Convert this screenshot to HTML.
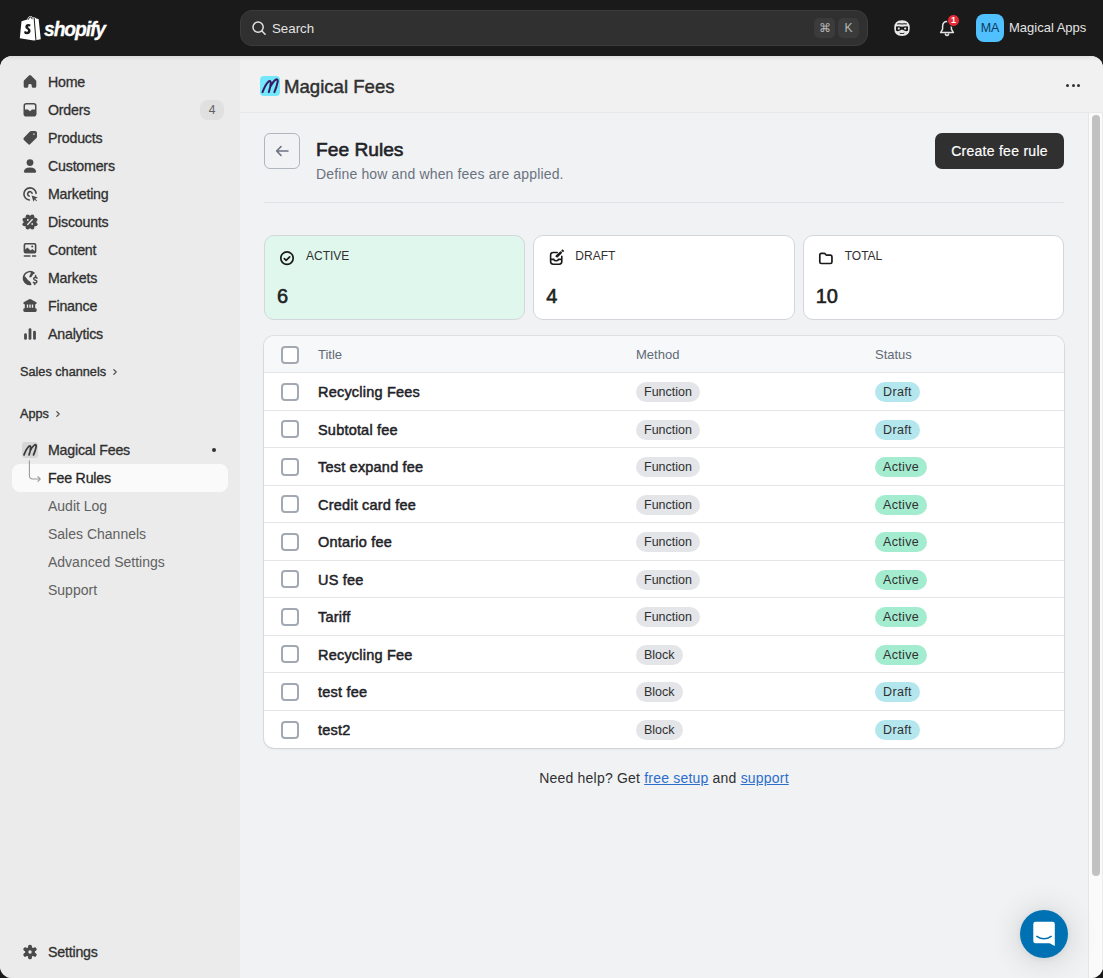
<!DOCTYPE html>
<html><head><meta charset="utf-8">
<style>
*{box-sizing:border-box;margin:0;padding:0}
html,body{width:1103px;height:978px;overflow:hidden;background:#1a1a1a;font-family:"Liberation Sans",sans-serif;color:#303030}
.a{position:absolute;white-space:nowrap}
#frame{position:absolute;left:0;top:56px;width:1103px;height:922px;border-radius:12px;overflow:hidden;background:#f1f2f4}
#side{position:absolute;left:0;top:0;width:240px;height:922px;background:#ebebeb}
#apphdr{position:absolute;left:240px;top:0;width:863px;height:57px;background:#f1f1f1;border-bottom:1px solid #e8e8e8}
#sb{position:absolute;left:1088px;top:57px;width:15px;height:865px;background:#fafafa;border-left:1px solid #e6e6e6;border-right:1px solid #ececec}
#thumb{position:absolute;left:3px;top:2px;width:8px;height:761px;border-radius:4px;background:#c1c1c1}
.nv{position:absolute;left:48px;font-size:14.2px;line-height:28px;color:#303030;white-space:nowrap;-webkit-text-stroke:.3px #303030;margin-top:.3px;letter-spacing:-.2px}
.ic{position:absolute;left:20px;width:20px;height:20px}
.sub{position:absolute;left:48px;font-size:14px;line-height:28px;color:#616161;white-space:nowrap}
.card{position:absolute;top:235px;height:85px;border:1px solid #d3d6da;border-radius:10px;background:#fff}
.lbl{position:absolute;left:41px;top:12px;font-size:12px;line-height:16px;color:#303030}
.num{position:absolute;left:12px;top:48px;font-size:20px;line-height:24px;color:#1f1f1f;-webkit-text-stroke:.6px #1f1f1f}
.card svg{position:absolute;left:12px;top:13px}
#tbl{position:absolute;left:264px;top:336px;width:800px;height:411.5px;background:#fff;border-radius:10px;box-shadow:0 0 0 1px rgba(0,0,0,.07),0 1px 3px rgba(0,0,0,.08);overflow:hidden}
#th{position:absolute;left:0;top:0;width:800px;height:37px;background:#f7f8fa;border-bottom:1px solid #e3e5e8}
.hd{position:absolute;top:.8px;line-height:36px;font-size:13px;color:#616a75}
.row{position:absolute;left:0;width:800px;height:37.5px;border-bottom:1px solid #e3e5e8}
.cb{position:absolute;left:17px;top:50%;margin-top:-8.4px;width:18px;height:18px;border:2px solid #a3a9b3;border-radius:4px;background:#fff}
#th .cb{background:#fff}
.ttl{position:absolute;left:54px;top:1.2px;line-height:36.5px;font-size:14.5px;letter-spacing:.2px;color:#1f2328;-webkit-text-stroke:.5px #1f2328}
.bdg{position:absolute;top:50%;margin-top:-8.8px;height:20px;border-radius:10px;font-size:12.5px;line-height:20px;padding:0 8px;color:#303030}
.meth{left:372px;background:#e3e5e8}
.st{left:611px;letter-spacing:.35px}
.dr{background:#b4e6ee}
.ac{background:#a4ecd0}
</style></head><body>
<!-- top bar -->
<svg class="a" style="left:19px;top:15px" width="23" height="26" viewBox="0 0 23 26">
  <path fill="#fff" d="M2.5 6.2 L8.2 4.6 Q9.2 1 11.8 1 Q13 1 13.6 2.4 L15.6 2.1 L17.2 3.6 L19.6 4 L21.8 24.2 L14.8 25.6 L0.8 23.3 Z"/>
  <path fill="#1a1a1a" d="M15.6 2.2 L17.4 24.9 L16.4 25.1 L14.6 2.6 Z"/>
  <path fill="none" stroke="#1a1a1a" stroke-width="1" d="M9.2 4.7 Q10.2 1.8 11.8 1.9 Q13 2 13.1 4.2"/>
  <path fill="#1a1a1a" d="M11.6 9.6 Q10.6 9 9.3 9 Q6.4 9.1 6.3 11.9 Q6.3 13.2 8 14.3 Q9.2 15.1 9.1 15.8 Q9 16.8 8 16.8 Q6.7 16.8 5.8 15.7 L5.1 18 Q6 19.2 8 19.2 Q11.4 19.1 11.6 15.8 Q11.6 14 9.9 13 Q8.8 12.3 8.9 11.8 Q9 11.2 10.1 11.2 Q10.9 11.2 11 11.4 Z"/>
</svg>
<div class="a" style="left:43.5px;top:14.7px;font-size:21px;line-height:28px;font-weight:bold;font-style:italic;color:#fff;letter-spacing:-1.2px;transform:scaleX(.92);transform-origin:0 0;-webkit-text-stroke:.3px #fff">shopify</div>
<div class="a" style="left:240px;top:10px;width:628px;height:36px;border-radius:12px;background:#303030;border:1px solid #3c3c3c"></div>
<svg class="a" style="left:250px;top:18px" width="20" height="20" viewBox="0 0 20 20"><circle cx="8.1" cy="9.2" r="5.1" fill="none" stroke="#e3e3e3" stroke-width="1.5"/><path d="M11.9 13 L15.1 16.2" stroke="#e3e3e3" stroke-width="1.5" stroke-linecap="round"/></svg>
<div class="a" style="left:272px;top:15.3px;font-size:13.3px;line-height:28px;color:#e3e3e3">Search</div>
<div class="a" style="left:814px;top:18px;width:21px;height:20px;border-radius:5px;background:#3b3b3b;color:#b5b5b5;font-size:12px;line-height:20px;text-align:center">&#8984;</div>
<div class="a" style="left:838px;top:18px;width:21px;height:20px;border-radius:5px;background:#3b3b3b;color:#b5b5b5;font-size:12px;line-height:20px;text-align:center">K</div>
<!-- mask icon -->
<svg class="a" style="left:892px;top:18px" width="20" height="20" viewBox="0 0 20 20">
  <path fill="#e8e8e8" d="M10 2.2 Q17.8 2.2 17.8 10 Q17.8 18 10 18 Q2.2 18 2.2 10 Q2.2 2.2 10 2.2Z"/>
  <path fill="#1a1a1a" d="M4 8.6 Q6.5 7.6 10 8.8 Q13.5 7.6 16 8.6 V12.6 Q14.4 13.6 12.6 12.8 L10 11.6 L7.4 12.8 Q5.6 13.6 4 12.6Z"/>
  <circle cx="6.8" cy="10.6" r="1.1" fill="#e8e8e8"/><circle cx="13.2" cy="10.6" r="1.1" fill="#e8e8e8"/>
  <path fill="#1a1a1a" d="M5 5.6 Q7 4.8 10 5.5 Q13 4.8 15 5.6 L14.6 6.6 Q12.5 6 10 6.6 Q7.5 6 5.4 6.6Z"/>
  <path fill="#1a1a1a" d="M7.5 14.6 Q10 15.8 12.5 14.6 L12.2 15.6 Q10 16.6 7.8 15.6Z"/>
</svg>
<!-- bell -->
<svg class="a" style="left:936.6px;top:18px" width="20" height="20" viewBox="0 0 20 20"><path fill="none" stroke="#e3e3e3" stroke-width="1.5" stroke-linejoin="round" d="M10 3.6 Q14.2 3.6 14.4 8.4 V11.2 L16.4 14.6 H3.6 L5.6 11.2 V8.4 Q5.8 3.6 10 3.6Z"/><path fill="none" stroke="#e3e3e3" stroke-width="1.5" d="M8.3 15.4 Q8.4 17.4 10 17.4 Q11.6 17.4 11.7 15.4"/></svg>
<div class="a" style="left:947px;top:14px;width:13px;height:13px;border-radius:50%;background:#e22c38;border:1px solid #1a1a1a;color:#fff;font-size:9px;line-height:11px;text-align:center;font-weight:bold">1</div>
<div class="a" style="left:976px;top:14px;width:28px;height:28px;border-radius:8px;background:#51c0ff;color:#0b3b5c;font-size:12.5px;line-height:28px;text-align:center">MA</div>
<div class="a" style="left:1009px;top:14px;font-size:13px;line-height:28px;color:#e3e3e3">Magical Apps</div>

<div id="frame">
  <div id="side"></div>
  <div id="apphdr"></div>
  <div id="sb"><div id="thumb"></div></div>
  <div style="position:absolute;left:0;top:0;width:1103px;height:5px;background:linear-gradient(rgba(0,0,0,.07),rgba(0,0,0,0))"></div>
</div>

<!-- sidebar -->
<!-- sidebar icons -->
<svg class="ic" style="top:72px" viewBox="0 0 20 20"><path fill="#4a4a4a" d="M10 3 Q10.5 3 11 3.5 L15.8 8.2 Q16.3 8.7 16.3 9.5 V14.2 Q16.3 15.7 14.8 15.7 H12.8 Q11.7 15.7 11.7 14.6 V13.2 Q11.7 11.9 10 11.9 Q8.3 11.9 8.3 13.2 V14.6 Q8.3 15.7 7.2 15.7 H5.2 Q3.7 15.7 3.7 14.2 V9.5 Q3.7 8.7 4.2 8.2 L9 3.5 Q9.5 3 10 3Z"/></svg>
<svg class="ic" style="top:100px" viewBox="0 0 20 20"><path fill="#4a4a4a" fill-rule="evenodd" d="M6.2 3 H13.8 Q16.5 3 16.5 5.8 V13.8 Q16.5 16.6 13.8 16.6 H6.2 Q3.5 16.6 3.5 13.8 V5.8 Q3.5 3 6.2 3Z M6.4 4.6 Q5 4.6 5 6 V9.6 H7.6 Q8.4 9.6 8.8 10.3 L10 11.3 L11.2 10.3 Q11.6 9.6 12.4 9.6 H15 V6 Q15 4.6 13.6 4.6Z"/></svg>
<svg class="ic" style="top:128px" viewBox="0 0 20 20"><path fill="#4a4a4a" fill-rule="evenodd" d="M11.3 3 H15 Q17 3 17 5 V8.7 Q17 9.5 16.4 10.1 L10.3 16.1 Q9.2 17.2 8.1 16.1 L3.9 11.9 Q2.8 10.8 3.9 9.7 L9.9 3.6 Q10.5 3 11.3 3Z M13.2 5.4 H14.6 V6.8 H13.2Z"/></svg>
<svg class="ic" style="top:156px" viewBox="0 0 20 20"><circle cx="10" cy="6.6" r="3.4" fill="#4a4a4a"/><path fill="#4a4a4a" d="M3.9 15.4 Q4.4 11.4 10 11.4 Q15.6 11.4 16.1 15.4 Q16.2 16.8 14.8 16.8 H5.2 Q3.8 16.8 3.9 15.4Z"/></svg>
<svg class="ic" style="top:184px" viewBox="0 0 20 20"><path fill="none" stroke="#4a4a4a" stroke-width="1.6" stroke-linecap="round" d="M9.4 16 A6.1 6.1 0 1 1 16.1 9.4"/><path fill="none" stroke="#4a4a4a" stroke-width="1.6" stroke-linecap="round" d="M9.1 12.1 A2.3 2.3 0 1 1 12.1 9.2"/><path fill="#4a4a4a" d="M11.6 11.4 L17.8 13.5 L15.2 14.7 L17 16.5 L16.3 17.2 L14.5 15.4 L13.4 17.8Z"/></svg>
<svg class="ic" style="top:212px" viewBox="0 0 20 20"><g fill="#4a4a4a"><circle cx="15.45" cy="12.26" r="2.1"/><circle cx="12.26" cy="15.45" r="2.1"/><circle cx="7.74" cy="15.45" r="2.1"/><circle cx="4.55" cy="12.26" r="2.1"/><circle cx="4.55" cy="7.74" r="2.1"/><circle cx="7.74" cy="4.55" r="2.1"/><circle cx="12.26" cy="4.55" r="2.1"/><circle cx="15.45" cy="7.74" r="2.1"/><circle cx="10" cy="10" r="6.3"/></g><path d="M12.3 7.5 L7.7 12.5" stroke="#ebebeb" stroke-width="1.3" stroke-linecap="round"/><rect x="7" y="7.2" width="1.6" height="1.6" fill="#ebebeb"/><rect x="11.4" y="11.2" width="1.6" height="1.6" fill="#ebebeb"/></svg>
<svg class="ic" style="top:240px" viewBox="0 0 20 20"><path fill="#4a4a4a" fill-rule="evenodd" d="M5.6 3 H14.4 Q16.4 3 16.4 5 V11.6 Q16.4 13.6 14.4 13.6 H5.6 Q3.6 13.6 3.6 11.6 V5 Q3.6 3 5.6 3Z M5.8 4.6 Q5.2 4.6 5.2 5.2 V9.6 L7.4 7.6 L10.6 10.4 L12.2 9 L14.8 11 V5.2 Q14.8 4.6 14.2 4.6Z"/><circle cx="12.2" cy="6.6" r="1" fill="#4a4a4a"/><rect x="3.6" y="15.3" width="7" height="1.5" rx=".7" fill="#4a4a4a"/><rect x="11.8" y="15.3" width="4.6" height="1.5" rx=".7" fill="#4a4a4a"/></svg>
<svg class="ic" style="top:268px" viewBox="0 0 20 20"><path fill="none" stroke="#4a4a4a" stroke-width="1.5" d="M14.3 5.4 A6.4 6.4 0 1 0 11.2 16.3"/><path fill="#4a4a4a" d="M3.4 8.4 Q5 7.6 6.6 10.2 Q8.2 12.8 9.9 13.6 Q11 14.4 11.4 16.6 Q4.6 17.4 3.3 11Z"/><path fill="#4a4a4a" d="M11 4 Q13.6 4 14.9 5.2 Q13.2 5.8 12.4 7.4 Q11.6 9.4 10 9.5 Q8.9 9.3 9.4 8 Q10.6 6.8 11 4Z"/><path fill="none" stroke="#4a4a4a" stroke-width="1.5" stroke-linecap="round" d="M17 10.2 Q16.5 9.3 15.3 9.3 Q13.7 9.4 13.7 10.8 Q13.8 11.9 15.3 12.2 Q16.9 12.5 16.9 13.8 Q16.8 15.1 15.2 15.1 Q14.1 15.1 13.5 14.4 M15.6 7.5 L15.6 9 M14.8 15.2 V16.4"/></svg>
<svg class="ic" style="top:296px" viewBox="0 0 20 20"><path fill="#4a4a4a" fill-rule="evenodd" d="M9.2 3.3 Q10 2.9 10.8 3.3 L15.9 5.9 Q16.7 6.3 16.7 7.1 Q16.7 8.2 15.6 8.2 H15.2 V12.2 H15.6 Q16.7 12.2 16.7 13.6 V14.6 Q16.7 16 15.3 16 H4.7 Q3.3 16 3.3 14.6 V13.6 Q3.3 12.2 4.4 12.2 H4.8 V8.2 H4.4 Q3.3 8.2 3.3 7.1 Q3.3 6.3 4.1 5.9Z M6.8 8.6 H8.2 V11.8 H6.8Z M9.3 8.6 H10.7 V11.8 H9.3Z M11.8 8.6 H13.2 V11.8 H11.8Z"/></svg>
<svg class="ic" style="top:324px" viewBox="0 0 20 20"><rect x="4.1" y="9.3" width="2.8" height="6.5" rx="1.4" fill="#4a4a4a"/><rect x="8.6" y="4.2" width="2.8" height="11.6" rx="1.4" fill="#4a4a4a"/><rect x="13.1" y="6.7" width="2.8" height="9.1" rx="1.4" fill="#4a4a4a"/></svg>
<svg class="ic" style="top:942px" viewBox="0 0 20 20"><g fill="#4a4a4a"><rect x="8.1" y="2.7" width="3.8" height="14.6" rx="1.6"/><rect x="8.1" y="2.7" width="3.8" height="14.6" rx="1.6" transform="rotate(60 10 10)"/><rect x="8.1" y="2.7" width="3.8" height="14.6" rx="1.6" transform="rotate(120 10 10)"/><circle cx="10" cy="10" r="5"/></g><circle cx="10" cy="10" r="1.7" fill="#ebebeb"/></svg>

<div class="nv" style="top:68px">Home</div>
<div class="nv" style="top:96px">Orders</div>
<div class="a" style="left:200px;top:100px;width:24px;height:20px;border-radius:8px;background:#e0e0e0;color:#616161;font-size:12px;line-height:20px;text-align:center">4</div>
<div class="nv" style="top:124px">Products</div>
<div class="nv" style="top:152px">Customers</div>
<div class="nv" style="top:180px">Marketing</div>
<div class="nv" style="top:208px">Discounts</div>
<div class="nv" style="top:236px">Content</div>
<div class="nv" style="top:264px">Markets</div>
<div class="nv" style="top:292px">Finance</div>
<div class="nv" style="top:320px">Analytics</div>
<div class="a" style="left:20px;top:361.8px;font-size:12.7px;line-height:20px;color:#303030;-webkit-text-stroke:.35px #303030">Sales channels</div>
<svg class="a" style="left:110.4px;top:367px" width="10" height="10" viewBox="0 0 10 10"><path d="M3.8 2.6 L6.2 5 L3.8 7.4" fill="none" stroke="#4a4a4a" stroke-width="1.2" stroke-linecap="round" stroke-linejoin="round"/></svg>
<div class="a" style="left:20px;top:403.7px;font-size:12.7px;line-height:20px;color:#303030;-webkit-text-stroke:.35px #303030">Apps</div>
<svg class="a" style="left:53.4px;top:409px" width="10" height="10" viewBox="0 0 10 10"><path d="M3.8 2.6 L6.2 5 L3.8 7.4" fill="none" stroke="#4a4a4a" stroke-width="1.2" stroke-linecap="round" stroke-linejoin="round"/></svg>
<div class="a" style="left:22px;top:442px;width:16px;height:16px;border-radius:3px;background:#d6d6d6"></div>
<svg class="a" style="left:22px;top:442px" width="16" height="16" viewBox="0 0 20 20"><path d="M2.5 16.1 Q5.6 8 8.6 5.4 Q10.6 4 10.8 6.8 Q10.6 11 8.8 16.1 M10 11.4 Q13 5.5 15.8 3.6 Q17.8 2.6 17.8 5.4 Q17 10 14.4 16.1" fill="none" stroke="#3a3a3a" stroke-width="2.2" stroke-linecap="round" stroke-linejoin="round"/></svg>
<div class="nv" style="top:436px">Magical Fees</div>
<div class="a" style="left:212px;top:448px;width:4px;height:4px;border-radius:50%;background:#303030"></div>
<div class="a" style="left:12px;top:464px;width:216px;height:28px;border-radius:8px;background:#fafafa"></div>
<svg class="a" style="left:26px;top:458px" width="18" height="26" viewBox="0 0 18 26"><path d="M3.4 2.5 V17.5 Q3.4 21 7 21 H14" fill="none" stroke="#9a9a9a" stroke-width="1.1"/><path d="M11.6 18.4 L14.2 21 L11.6 23.6" fill="none" stroke="#9a9a9a" stroke-width="1.1" stroke-linejoin="round"/></svg>
<div class="nv" style="top:464px;color:#1f1f1f">Fee Rules</div>
<div class="sub" style="top:492px">Audit Log</div>
<div class="sub" style="top:520px">Sales Channels</div>
<div class="sub" style="top:548px">Advanced Settings</div>
<div class="sub" style="top:576px">Support</div>
<div class="nv" style="top:938px">Settings</div>

<!-- app header -->
<div class="a" style="left:260px;top:76px;width:20px;height:20px;border-radius:4px;background:#72e8fa"></div>
<svg class="a" style="left:260px;top:76px" width="20" height="20" viewBox="0 0 20 20"><path d="M2.5 16.1 Q5.6 8 8.6 5.4 Q10.6 4 10.8 6.8 Q10.6 11 8.8 16.1 M10 11.4 Q13 5.5 15.8 3.6 Q17.8 2.6 17.8 5.4 Q17 10 14.4 16.1" fill="none" stroke="#3a1a63" stroke-width="2" stroke-linecap="round" stroke-linejoin="round"/></svg>
<div class="a" style="left:284px;top:72.7px;font-size:18.6px;line-height:28px;color:#303030;-webkit-text-stroke:.45px #303030">Magical Fees</div>
<div class="a" style="left:1066px;top:84px;width:3px;height:3px;border-radius:50%;background:#303030"></div>
<div class="a" style="left:1071.5px;top:84px;width:3px;height:3px;border-radius:50%;background:#303030"></div>
<div class="a" style="left:1077px;top:84px;width:3px;height:3px;border-radius:50%;background:#303030"></div>

<!-- page header -->
<div class="a" style="left:264px;top:133px;width:36px;height:36px;border:1px solid #b0b6be;border-radius:6px"></div>
<svg class="a" style="left:272px;top:141px" width="20" height="20" viewBox="0 0 20 20"><path d="M16 10 H4.6 M9 5.6 L4.6 10 L9 14.4" fill="none" stroke="#6b7280" stroke-width="1.5" stroke-linecap="round" stroke-linejoin="round"/></svg>
<div class="a" style="left:316px;top:138px;font-size:19.2px;line-height:24px;color:#1f2328;-webkit-text-stroke:.6px #1f2328">Fee Rules</div>
<div class="a" style="left:316px;top:163.5px;font-size:14px;line-height:20px;color:#6b7280;letter-spacing:.15px">Define how and when fees are applied.</div>
<div class="a" style="left:935px;top:133px;width:129px;height:36px;border-radius:7px;background:#303030;color:#fff;font-size:14px;line-height:36px;text-align:center;letter-spacing:.27px;-webkit-text-stroke:.2px #fff">Create fee rule</div>
<div class="a" style="left:264px;top:202px;width:800px;height:1px;background:#e1e3e6"></div>

<!-- cards -->
<div class="card" style="left:264px;width:261.3px;background:#e0f7ee">
  <svg width="20" height="20" viewBox="0 0 20 20"><circle cx="10" cy="9.15" r="6.2" fill="none" stroke="#1a1a1a" stroke-width="1.7"/><path d="M7.3 9.6 L9.1 11.3 L12.7 7.8" fill="none" stroke="#1a1a1a" stroke-width="1.7" stroke-linecap="round" stroke-linejoin="round"/></svg>
  <div class="lbl">ACTIVE</div><div class="num">6</div>
</div>
<div class="card" style="left:533.3px;width:261.3px">
  <svg width="20" height="20" viewBox="0 0 20 20"><path d="M11.2 3.5 H7.2 Q4.6 3.5 4.6 6.1 V12.6 Q4.6 15.2 7.2 15.2 H13.2 Q15.8 15.2 15.8 12.6 V7.2" fill="none" stroke="#1a1a1a" stroke-width="1.6" stroke-linecap="round"/><path d="M4.6 10.4 H7.7 Q8.3 11.8 10.1 11.8 Q11.9 11.8 12.5 10.4 H15.8" fill="none" stroke="#1a1a1a" stroke-width="1.6"/><path d="M10.9 7.2 L14.7 3.6" stroke="#1a1a1a" stroke-width="2.6" stroke-linecap="round"/><path d="M16.4 1.4 L17 2" stroke="#1a1a1a" stroke-width="1.9" stroke-linecap="round"/></svg>
  <div class="lbl">DRAFT</div><div class="num">4</div>
</div>
<div class="card" style="left:802.7px;width:261.3px">
  <svg width="20" height="20" viewBox="0 0 20 20"><path d="M3.8 6 Q3.8 4.4 5.4 4.4 H8.2 Q8.9 4.4 9.3 5 L9.8 5.6 Q10.2 6.2 10.9 6.2 H14.4 Q15.95 6.2 15.95 7.8 V12.9 Q15.95 14.5 14.4 14.5 H5.4 Q3.8 14.5 3.8 12.9Z" fill="none" stroke="#1a1a1a" stroke-width="1.7" stroke-linejoin="round"/></svg>
  <div class="lbl">TOTAL</div><div class="num">10</div>
</div>

<!-- table -->
<div id="tbl">
  <div id="th"><div class="cb"></div><div class="hd" style="left:54px">Title</div><div class="hd" style="left:372px">Method</div><div class="hd" style="left:611px">Status</div></div>
  <div class="row" style="top:37px"><div class="cb"></div><div class="ttl">Recycling Fees</div><div class="bdg meth">Function</div><div class="bdg st dr">Draft</div></div>
  <div class="row" style="top:74.5px"><div class="cb"></div><div class="ttl">Subtotal fee</div><div class="bdg meth">Function</div><div class="bdg st dr">Draft</div></div>
  <div class="row" style="top:112px"><div class="cb"></div><div class="ttl">Test expand fee</div><div class="bdg meth">Function</div><div class="bdg st ac">Active</div></div>
  <div class="row" style="top:149.5px"><div class="cb"></div><div class="ttl">Credit card fee</div><div class="bdg meth">Function</div><div class="bdg st ac">Active</div></div>
  <div class="row" style="top:187px"><div class="cb"></div><div class="ttl">Ontario fee</div><div class="bdg meth">Function</div><div class="bdg st ac">Active</div></div>
  <div class="row" style="top:224.5px"><div class="cb"></div><div class="ttl">US fee</div><div class="bdg meth">Function</div><div class="bdg st ac">Active</div></div>
  <div class="row" style="top:262px"><div class="cb"></div><div class="ttl">Tariff</div><div class="bdg meth">Function</div><div class="bdg st ac">Active</div></div>
  <div class="row" style="top:299.5px"><div class="cb"></div><div class="ttl">Recycling Fee</div><div class="bdg meth">Block</div><div class="bdg st ac">Active</div></div>
  <div class="row" style="top:337px"><div class="cb"></div><div class="ttl">test fee</div><div class="bdg meth">Block</div><div class="bdg st dr">Draft</div></div>
  <div class="row" style="top:374.5px;border-bottom:0"><div class="cb"></div><div class="ttl">test2</div><div class="bdg meth">Block</div><div class="bdg st dr">Draft</div></div>
</div>

<div class="a" style="left:240px;width:848px;top:768px;text-align:center;font-size:14px;line-height:20px;color:#303030;letter-spacing:.2px">Need help? Get <u style="color:#2c6ecb">free setup</u> and <u style="color:#2c6ecb">support</u></div>

<!-- chat -->
<div class="a" style="left:1020px;top:910px;width:48px;height:48px;border-radius:50%;background:#0071b2;box-shadow:0 1px 6px rgba(0,0,0,.06),0 2px 32px rgba(0,0,0,.16)"></div>
<svg class="a" style="left:1032px;top:921px" width="24" height="26" viewBox="0 0 24 26"><path fill="#fff" d="M1.3 3 Q1.3 0.8 3.5 0.8 H20.6 Q22.8 0.8 22.8 3 V25 L17.6 22.3 H3.5 Q1.3 22.3 1.3 20.1Z"/><path d="M4.8 15.4 Q12 20.2 19.2 15.4" fill="none" stroke="#0071b2" stroke-width="1.5" stroke-linecap="round"/></svg>
</body></html>
